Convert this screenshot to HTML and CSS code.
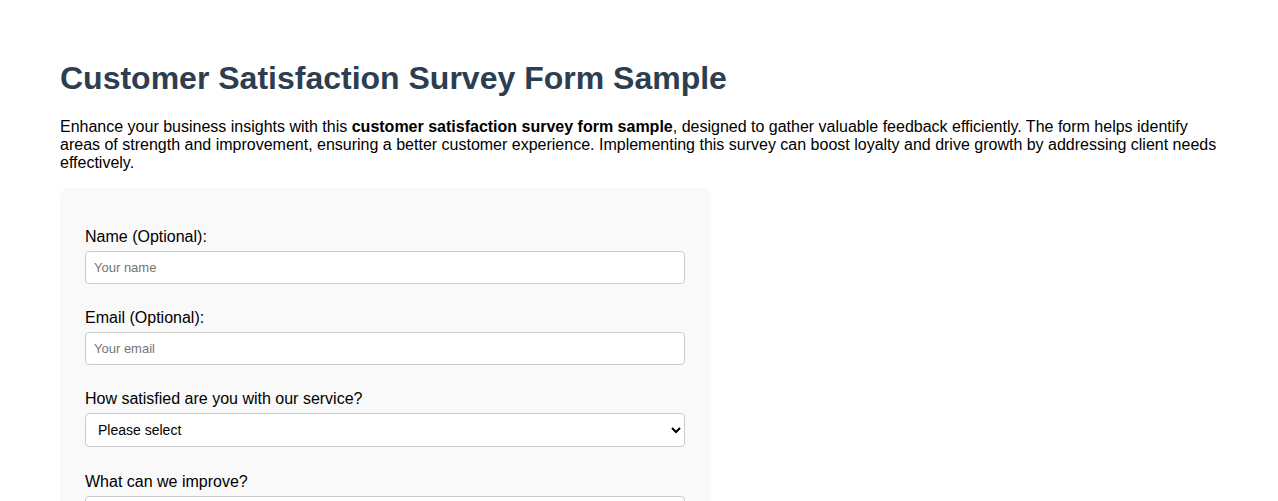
FILE: index.html
```html
<!DOCTYPE html>
<html lang="en">
<head>
<meta charset="utf-8">
<title>Customer Satisfaction Survey Form Sample</title>
<link rel="stylesheet" href="styles.css">
</head>
<body>
<h1 class="title">Customer Satisfaction Survey Form Sample</h1>
<p class="intro">Enhance your business insights with this <strong>customer satisfaction survey form sample</strong>, designed to gather valuable feedback efficiently. The form helps identify areas of strength and improvement, ensuring a better customer experience. Implementing this survey can boost loyalty and drive growth by addressing client needs effectively.</p>
<form class="survey">
  <div class="group">
    <label class="label" for="name">Name (Optional):</label>
    <input class="field" id="name" type="text" placeholder="Your name">
  </div>
  <div class="group">
    <label class="label" for="email">Email (Optional):</label>
    <input class="field" id="email" type="email" placeholder="Your email">
  </div>
  <div class="group group-select">
    <label class="label" for="sat">How satisfied are you with our service?</label>
    <select class="field select" id="sat">
      <option>Please select</option>
      <option>Very satisfied</option>
      <option>Satisfied</option>
      <option>Neutral</option>
      <option>Dissatisfied</option>
      <option>Very dissatisfied</option>
    </select>
  </div>
  <div class="group">
    <label class="label" for="improve">What can we improve?</label>
    <textarea class="field area" id="improve" rows="4" placeholder="Your suggestions"></textarea>
  </div>
</form>
</body>
</html>
```
FILE: styles.css
```css
html, body {
  margin: 0;
  background: #fff;
}
body {
  padding: 60px 60px;
  font-family: "Liberation Sans", Arial, sans-serif;
  color: #000;
}
.title {
  margin: 0 0 21px;
  font-size: 32px;
  line-height: 37px;
  font-weight: bold;
  color: #2c3e50;
}
.intro {
  margin: 0 0 16px;
  font-size: 16px;
  line-height: 18px;
}
.survey {
  width: 600px;
  padding: 40px 25px 20px;
  background: #f9f9f9;
  border-radius: 8px;
}
.group {
  display: flex;
  flex-direction: column;
  margin-bottom: 25px;
}
.group-select {
  margin-bottom: 26px;
}
.label {
  font-size: 16px;
  line-height: 18px;
  margin-bottom: 5px;
}
.field {
  box-sizing: border-box;
  width: 600px;
  height: 33px;
  padding: 8px;
  font-family: "Liberation Sans", Arial, sans-serif;
  font-size: 13px;
  border: 1px solid #ccc;
  border-radius: 4px;
  background: #fff;
  color: #000;
}
.field::placeholder {
  color: #757575;
}
.select {
  height: 34px;
  font-size: 14px;
  padding: 6px 8px;
}
.area {
  height: 90px;
  resize: vertical;
}
```
